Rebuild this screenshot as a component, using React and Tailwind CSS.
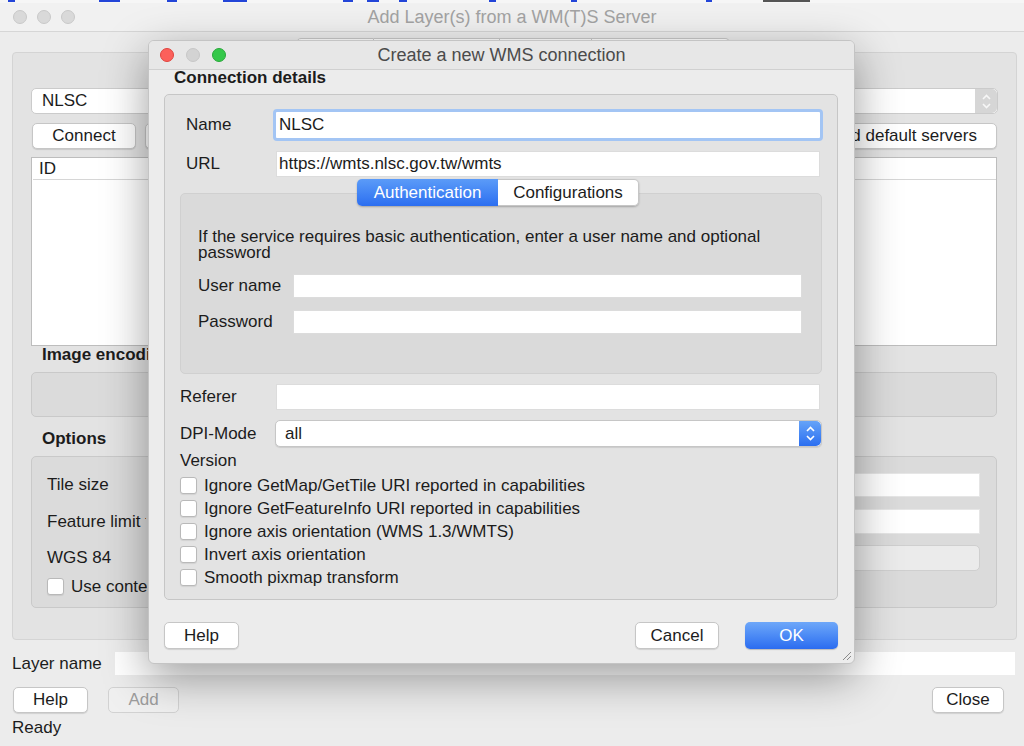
import React from "react";

function Stepper({ blue }) {
  const stroke = blue ? "#ffffff" : "#f7f7f7";
  return (
    <div
      className={
        blue
          ? "flex h-full w-[22px] flex-col items-center justify-center gap-[3px] rounded-r-[5px] bg-gradient-to-b from-[#66a3f8] to-[#2b6ef0]"
          : "flex h-full w-[22px] flex-col items-center justify-center gap-[3px] rounded-r-[5px] bg-[#d6d6d6]"
      }
    >
      <svg width="9" height="6" viewBox="0 0 9 6">
        <path d="M1 5 L4.5 1.5 L8 5" fill="none" stroke={stroke} strokeWidth="1.6" />
      </svg>
      <svg width="9" height="6" viewBox="0 0 9 6">
        <path d="M1 1 L4.5 4.5 L8 1" fill="none" stroke={stroke} strokeWidth="1.6" />
      </svg>
    </div>
  );
}

function BgBtn({ children, className = "" }) {
  return (
    <div
      className={
        "flex h-[26px] items-center justify-center rounded-[5px] border border-[#c6c6c6] bg-white shadow-[0_1px_1px_rgba(0,0,0,0.12)] " +
        className
      }
    >
      {children}
    </div>
  );
}

function Check() {
  return <div className="h-[17px] w-[17px] shrink-0 rounded-[3px] border border-[#b9b9b9] bg-white shadow-[0_1px_1px_rgba(0,0,0,0.08)]" />;
}

function BackgroundWindow() {
  return (
    <div className="flex h-full w-full flex-col">
      {/* strip of window behind */}
      <div className="flex h-[3px] bg-[#f6f6f6]">
        <div className="ml-[8px] h-[2px] w-[7px] bg-[#2345d8]" />
        <div className="ml-[84px] h-[2px] w-[21px] bg-[#2345d8]" />
        <div className="ml-[47px] h-[2px] w-[10px] bg-[#2345d8]" />
        <div className="ml-[46px] h-[2px] w-[24px] bg-[#2345d8]" />
        <div className="ml-[96px] h-[2px] w-[10px] bg-[#2345d8]" />
        <div className="ml-[14px] h-[2px] w-[12px] bg-[#2345d8]" />
        <div className="ml-[20px] h-[2px] w-[8px] bg-[#2345d8]" />
        <div className="ml-[82px] h-[2px] w-[7px] bg-[#2345d8]" />
        <div className="ml-[75px] h-[2px] w-[6px] bg-[#2345d8]" />
        <div className="ml-[129px] h-[2px] w-[6px] bg-[#2345d8]" />
        <div className="ml-[51px] h-[2px] w-[47px] bg-[#555555]" />
      </div>
      {/* title bar */}
      <div className="grid h-[28px] grid-cols-[1fr_auto_1fr] items-center bg-[#f1f1f1]">
        <div className="flex items-center gap-[10px] pl-[13px]">
          <div className="h-[14px] w-[14px] rounded-full border border-[#c9c9c9] bg-[#d9d9d9]" />
          <div className="h-[14px] w-[14px] rounded-full border border-[#c9c9c9] bg-[#d9d9d9]" />
          <div className="h-[14px] w-[14px] rounded-full border border-[#c9c9c9] bg-[#d9d9d9]" />
        </div>
        <div className="text-[18px] text-[#a3a3a3]">Add Layer(s) from a WM(T)S Server</div>
        <div />
      </div>
      {/* tab strip */}
      <div className="flex h-[21px] border-t border-[#d6d6d6] bg-[#ececec] pt-[6px]">
        <div className="ml-[296px] flex h-[20px]">
          <div className="w-[78px] rounded-l-[5px] border border-[#c8c8c8] bg-white" />
          <div className="w-[126px] border-y border-r border-[#c8c8c8] bg-white" />
          <div className="w-[92px] border-y border-r border-[#c8c8c8] bg-white" />
          <div className="w-[138px] rounded-r-[5px] border-y border-r border-[#c8c8c8] bg-white" />
        </div>
      </div>
      {/* panel */}
      <div className="ml-[12px] flex h-[588px] w-[1005px] flex-col rounded-[4px] border border-[#d4d4d4] bg-[#e3e3e3] pl-[18px] pr-[18px]">
        <div className="mt-[35px] flex h-[26px] w-[967px] items-center rounded-[5px] border border-[#cbcbcb] bg-white">
          <div className="flex-1 pl-[10px]">NLSC</div>
          <Stepper />
        </div>
        <div className="mt-[9px] flex h-[26px] w-[966px] items-center pl-[1px]">
          <BgBtn className="w-[104px]">Connect</BgBtn>
          <BgBtn className="ml-[9px] w-[80px]" />
          <BgBtn className="ml-[9px] w-[80px]" />
          <BgBtn className="ml-[9px] w-[90px]" />
          <div className="flex-1" />
          <BgBtn className="w-[148px] justify-end overflow-hidden whitespace-nowrap pr-[19px]">d default servers</BgBtn>
        </div>
        <div className="mt-[8px] h-[189px] w-[966px] border border-[#bdbdbd] bg-white pl-[1px]">
          <div className="flex h-[22px] items-center border-b border-[#d6d6d6] pl-[6px]">ID</div>
        </div>
        <div className="h-[26px] w-[117px] overflow-hidden whitespace-nowrap pl-[11px] font-bold leading-[18px]">Image encoding</div>
        <div className="h-[45px] w-[966px] rounded-[5px] border border-[#c9c9c9] bg-[#dbdbdb] pl-[1px]" />
        <div className="h-[39px] pl-[11px] pt-[13px] font-bold leading-[18px]">Options</div>
        <div className="flex h-[152px] w-[966px] flex-col rounded-[5px] border border-[#c9c9c9] bg-[#dbdbdb] pl-[1px] pr-[16px] pt-[16px]">
          <div className="flex h-[24px] items-center">
            <div className="pl-[14px]">Tile size</div>
            <div className="ml-auto h-[24px] w-[680px] border border-[#e6e6e6] bg-white" />
          </div>
          <div className="mt-[12px] flex h-[25px] items-center">
            <div className="w-[113px] overflow-hidden whitespace-nowrap pl-[14px]">Feature limit for GetFeatureInfo</div>
            <div className="ml-auto h-[25px] w-[680px] border border-[#e6e6e6] bg-white" />
          </div>
          <div className="mt-[11px] flex h-[26px] items-center">
            <div className="pl-[14px]">WGS 84</div>
            <div className="ml-auto h-[26px] w-[680px] rounded-[5px] border border-[#cfcfcf] bg-[#ebebeb]" />
          </div>
          <div className="mt-[7px] flex h-[17px] items-center pl-[14px]">
            <Check />
            <div className="ml-[7px] w-[76px] overflow-hidden whitespace-nowrap">Use contextual WMS Legend</div>
          </div>
        </div>
      </div>
      {/* layer name */}
      <div className="mt-[12px] flex h-[23px] items-center">
        <div className="w-[115px] pl-[12px]">Layer name</div>
        <div className="h-[23px] w-[900px] bg-white" />
      </div>
      <div className="mt-[12px] flex h-[26px] items-center pl-[13px] pr-[20px]">
        <BgBtn className="w-[75px]">Help</BgBtn>
        <div className="ml-[20px] flex h-[26px] w-[71px] items-center justify-center rounded-[5px] border border-[#d2d2d2] bg-[#f0f0f0] text-[#9d9d9d]">
          Add
        </div>
        <div className="flex-1" />
        <BgBtn className="w-[72px]">Close</BgBtn>
      </div>
      <div className="mt-[6px] h-[18px] pl-[12px] leading-[18px]">Ready</div>
    </div>
  );
}

function Input({ className = "" }) {
  return <div className={"border border-[#dcdcdc] bg-white " + className} />;
}

function Dialog() {
  return (
    <div className="absolute left-[148px] top-[40px] flex h-[624px] w-[707px] flex-col overflow-hidden rounded-[6px] border border-[#c4c4c4] bg-[#ececec] shadow-[0_14px_45px_rgba(0,0,0,0.38)]">
      {/* title bar */}
      <div className="relative grid h-[29px] shrink-0 grid-cols-[1fr_auto_1fr] items-center border-b border-[#d0d0d0] bg-[#e7e7e7]">
        <div className="flex items-center gap-[12px] pl-[11px]">
          <div className="h-[14px] w-[14px] rounded-full border border-[#e0443e] bg-[#fc605b]" />
          <div className="h-[14px] w-[14px] rounded-full border border-[#c7c7c7] bg-[#d3d3d3]" />
          <div className="h-[14px] w-[14px] rounded-full border border-[#2aa83b] bg-[#35c84a]" />
        </div>
        <div className="text-[18px] text-[#4b4b4b]">Create a new WMS connection</div>
        <div />
      </div>
      <div className="h-[24px] pl-[25px] font-bold leading-[15px]">Connection details</div>
      {/* group */}
      <div className="ml-[15px] flex h-[507px] w-[674px] flex-col rounded-[5px] border border-[#c6c6c6] bg-[#e3e3e3]">
        <div className="mt-[14px] flex h-[32px] items-center">
          <div className="w-[108px] pl-[21px]">Name</div>
          <div className="flex h-[32px] w-[550px] items-center rounded-[4px] border-[3px] border-[#a3c5f4] bg-white pl-[3px]">
            NLSC
          </div>
        </div>
        <div className="mt-[10px] flex h-[26px] items-center">
          <div className="w-[111px] pl-[21px]">URL</div>
          <div className="flex h-[26px] w-[544px] items-center border border-[#dcdcdc] bg-white pl-[2px]">
            https://wmts.nlsc.gov.tw/wmts
          </div>
        </div>
        <div className="relative z-10 ml-[192px] mt-[2px] flex h-[27px] w-[282px] rounded-[5px] shadow-[0_1px_2px_rgba(0,0,0,0.25)]">
          <div className="flex w-[141px] items-center justify-center rounded-l-[5px] bg-gradient-to-b from-[#5b9bf8] to-[#2c6ef0] text-white">
            Authentication
          </div>
          <div className="flex w-[141px] items-center justify-center rounded-r-[5px] border border-l-0 border-[#c6c6c6] bg-white">
            Configurations
          </div>
        </div>
        <div className="-mt-[13px] ml-[15px] flex h-[181px] w-[642px] flex-col rounded-[5px] border border-[#d0d0d0] bg-[#dadada] pl-[17px] pt-[35px]">
          <div className="leading-[16px]">
            If the service requires basic authentication, enter a user name and optional
            <br />
            password
          </div>
          <div className="mt-[13px] flex h-[24px] items-center">
            <div className="w-[95px]">User name</div>
            <Input className="h-[24px] w-[509px]" />
          </div>
          <div className="mt-[12px] flex h-[24px] items-center">
            <div className="w-[95px]">Password</div>
            <Input className="h-[24px] w-[509px]" />
          </div>
        </div>
        <div className="mt-[10px] flex h-[26px] items-center">
          <div className="w-[111px] pl-[15px]">Referer</div>
          <Input className="h-[26px] w-[544px]" />
        </div>
        <div className="mt-[10px] flex h-[27px] items-center">
          <div className="w-[110px] pl-[15px]">DPI-Mode</div>
          <div className="flex h-[27px] w-[547px] items-center rounded-[5px] border border-[#c6c6c6] bg-white shadow-[0_1px_1px_rgba(0,0,0,0.1)]">
            <div className="flex-1 pl-[9px]">all</div>
            <Stepper blue />
          </div>
        </div>
        <div className="mt-[5px] h-[18px] pl-[15px] leading-[18px]">Version</div>
        <div className="mt-[4px] flex flex-col">
          {[
            "Ignore GetMap/GetTile URI reported in capabilities",
            "Ignore GetFeatureInfo URI reported in capabilities",
            "Ignore axis orientation (WMS 1.3/WMTS)",
            "Invert axis orientation",
            "Smooth pixmap transform",
          ].map((t) => (
            <div key={t} className="flex h-[23px] items-center pl-[15px]">
              <Check />
              <div className="ml-[7px]">{t}</div>
            </div>
          ))}
        </div>
      </div>
      {/* buttons */}
      <div className="mt-[22px] flex h-[27px] items-center pl-[15px] pr-[16px]">
        <BgBtn className="h-[27px] w-[75px]">Help</BgBtn>
        <div className="flex-1" />
        <BgBtn className="h-[27px] w-[84px]">Cancel</BgBtn>
        <div className="ml-[26px] flex h-[27px] w-[93px] items-center justify-center rounded-[5px] bg-gradient-to-b from-[#6ea7f9] to-[#2b6cf0] text-white shadow-[0_1px_1px_rgba(0,0,0,0.2)]">
          OK
        </div>
      </div>
      <div className="flex flex-1 items-end justify-end pb-[2px] pr-[2px]">
        <svg width="12" height="12" viewBox="0 0 12 12">
          <path d="M11 3 L3 11 M11 7 L7 11" stroke="#8a8a8a" strokeWidth="1" fill="none" />
        </svg>
      </div>
    </div>
  );
}

export default function App() {
  return (
    <div className="relative h-[746px] w-[1024px] overflow-hidden bg-[#ececec] font-['Liberation_Sans',Arial,sans-serif] text-[17px] text-[#1c1c1c]">
      <BackgroundWindow />
      <Dialog />
    </div>
  );
}
